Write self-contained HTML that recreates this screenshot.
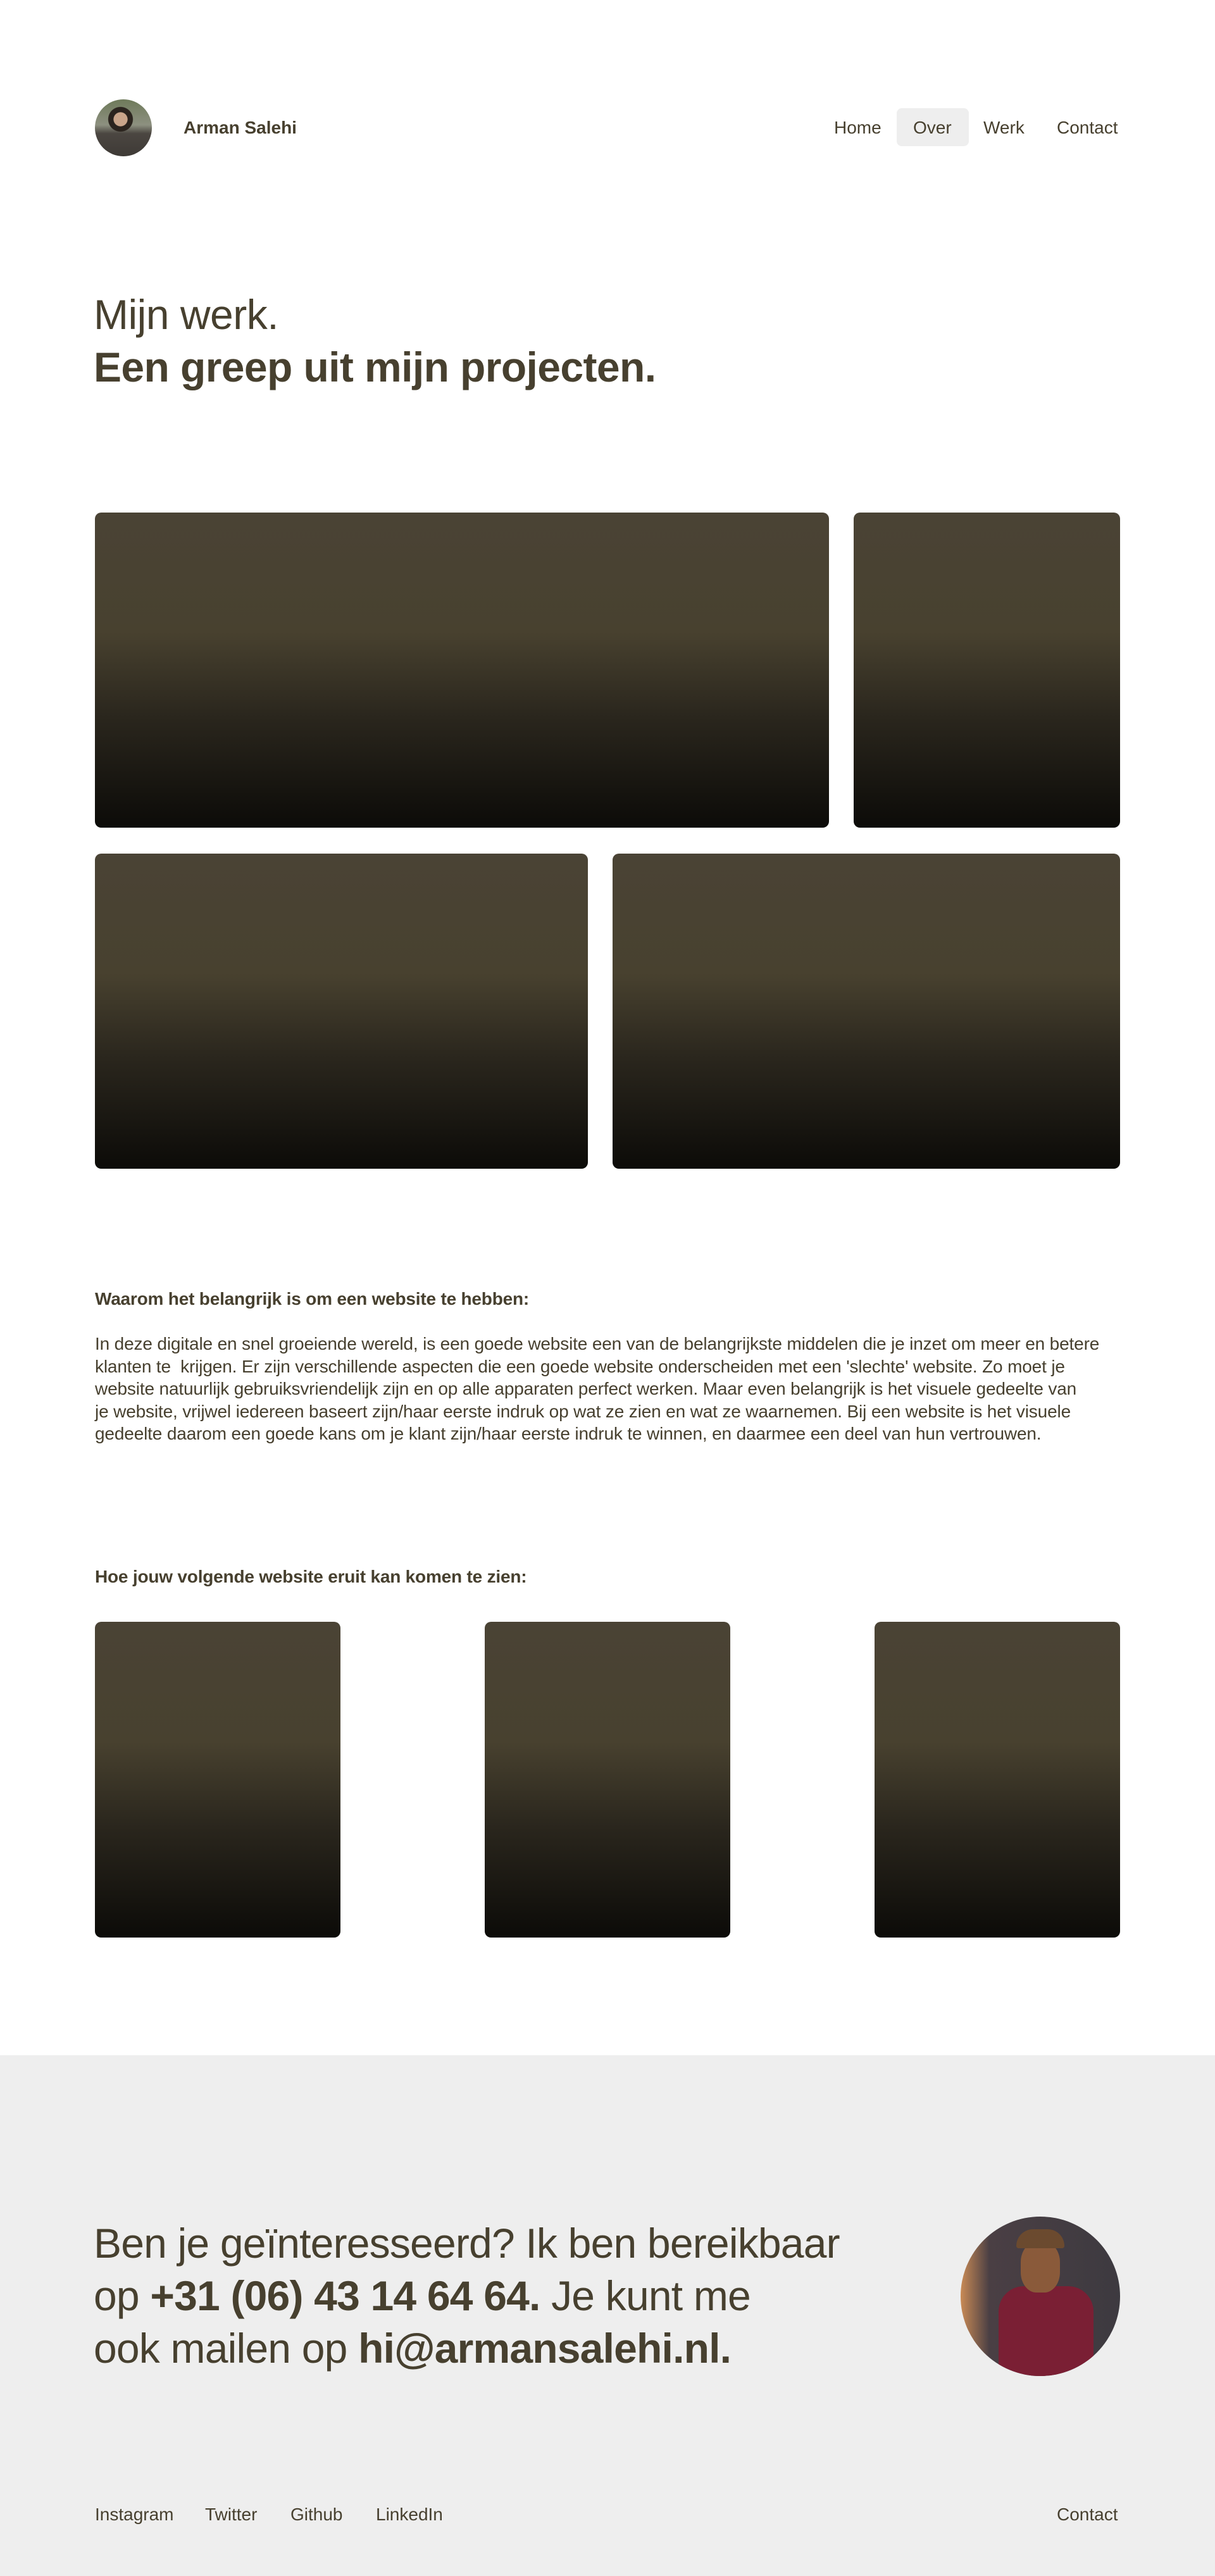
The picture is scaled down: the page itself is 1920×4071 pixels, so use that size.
<!DOCTYPE html>
<html><head><meta charset="utf-8"><style>
*{margin:0;padding:0;box-sizing:border-box}
body{width:1920px;height:4071px;background:#fff;font-family:"Liberation Sans",sans-serif;color:#47402f;position:relative;overflow:hidden}
.a{position:absolute}
.g{position:absolute;border-radius:10px;background:linear-gradient(180deg,#4a4335 0%,#48412f 38%,#2a261d 65%,#0c0b08 100%)}
.nav{font-size:28px;top:184px;line-height:36px}
.p{font-size:28px;line-height:35.5px;left:150px;top:2106px;letter-spacing:-0.15px;white-space:nowrap}
</style></head><body>
<div class="a" style="left:150px;top:157px;width:90px;height:90px;border-radius:50%;background:radial-gradient(circle at 45% 35%,#c9a58a 0 14%,#2b241e 15% 25%,transparent 26%),linear-gradient(180deg,#6e7a5a 0%,#8d9080 45%,#4b4641 60%,#3e3a36 100%)"></div>
<div class="a" style="left:290px;top:184px;font-size:28px;font-weight:bold;line-height:36px">Arman Salehi</div>
<div class="a" style="left:1417px;top:171px;width:114px;height:60px;border-radius:8px;background:#eeeeee"></div>
<div class="a nav" style="left:1318px">Home</div>
<div class="a nav" style="left:1443px">Over</div>
<div class="a nav" style="left:1554px">Werk</div>
<div class="a nav" style="left:1670px">Contact</div>
<div class="a" style="left:148px;top:455px;font-size:66px;line-height:84px;letter-spacing:-0.5px">Mijn werk.</div>
<div class="a" style="left:148px;top:538px;font-size:66px;line-height:84px;font-weight:bold;letter-spacing:-0.6px">Een greep uit mijn projecten.</div>
<div class="g" style="left:150px;top:810px;width:1160px;height:498px"></div>
<div class="g" style="left:1349px;top:810px;width:421px;height:498px"></div>
<div class="g" style="left:150px;top:1349px;width:779px;height:498px"></div>
<div class="g" style="left:968px;top:1349px;width:802px;height:498px"></div>
<div class="a" style="left:150px;top:2035px;font-size:28px;font-weight:bold;line-height:36px;letter-spacing:-0.2px">Waarom het belangrijk is om een website te hebben:</div>
<div class="a p">In deze digitale en snel groeiende wereld, is een goede website een van de belangrijkste middelen die je inzet om meer en betere<br>klanten te&nbsp; krijgen. Er zijn verschillende aspecten die een goede website onderscheiden met een 'slechte' website. Zo moet je<br>website natuurlijk gebruiksvriendelijk zijn en op alle apparaten perfect werken. Maar even belangrijk is het visuele gedeelte van<br>je website, vrijwel iedereen baseert zijn/haar eerste indruk op wat ze zien en wat ze waarnemen. Bij een website is het visuele<br>gedeelte daarom een goede kans om je klant zijn/haar eerste indruk te winnen, en daarmee een deel van hun vertrouwen.</div>
<div class="a" style="left:150px;top:2474px;font-size:28px;font-weight:bold;line-height:36px;letter-spacing:-0.2px">Hoe jouw volgende website eruit kan komen te zien:</div>
<div class="g" style="left:150px;top:2563px;width:388px;height:499px"></div>
<div class="g" style="left:766px;top:2563px;width:388px;height:499px"></div>
<div class="g" style="left:1382px;top:2563px;width:388px;height:499px"></div>
<div class="a" style="left:0;top:3248px;width:1920px;height:823px;background:#eeeeee"></div>
<div class="a" style="left:148px;top:3504px;width:1240px;font-size:66px;line-height:83px;letter-spacing:-0.8px">Ben je geïnteresseerd? Ik ben bereikbaar op <b>+31 (06) 43 14 64 64.</b> Je kunt me<br>ook mailen op <b>hi@armansalehi.nl.</b></div>
<div class="a" style="left:1518px;top:3503px;width:252px;height:252px;border-radius:50%;overflow:hidden;background:linear-gradient(90deg,#c98a55 0%,#4a3f44 18%,#3d3a40 100%)">
<div class="a" style="left:60px;top:110px;width:150px;height:150px;border-radius:40px 40px 0 0;background:#7a1f34"></div>
<div class="a" style="left:95px;top:40px;width:62px;height:80px;border-radius:40%;background:#8a5a3a"></div>
<div class="a" style="left:88px;top:20px;width:76px;height:30px;border-radius:30px 30px 4px 4px;background:#6b4a2f"></div>
</div>
<div class="a" style="left:150px;top:3956px;font-size:28px;line-height:36px">Instagram</div>
<div class="a" style="left:324px;top:3956px;font-size:28px;line-height:36px">Twitter</div>
<div class="a" style="left:459px;top:3956px;font-size:28px;line-height:36px">Github</div>
<div class="a" style="left:594px;top:3956px;font-size:28px;line-height:36px">LinkedIn</div>
<div class="a" style="left:1670px;top:3956px;font-size:28px;line-height:36px">Contact</div>
</body></html>
